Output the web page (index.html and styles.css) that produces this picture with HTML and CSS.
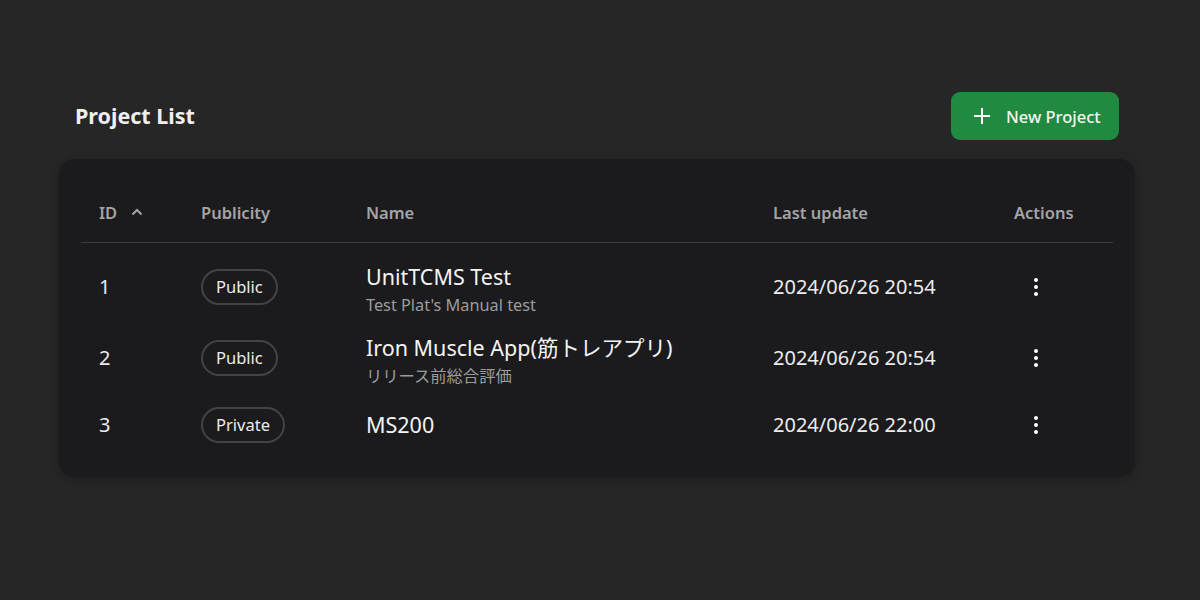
FILE: index.html
```html
<!DOCTYPE html>
<html lang="ja">
<head>
<meta charset="utf-8">
<title>Project List</title>
<link rel="stylesheet" href="styles.css">
</head>
<body>
<main class="page">
  <header class="page-head">
    <h1 class="title">Project List</h1>
    <button class="btn-new">
      <svg class="plus" width="18" height="18" viewBox="0 0 18 18"><path d="M9 1v16M1 9h16" stroke="#fff" stroke-width="2" fill="none"/></svg>
      <span>New Project</span>
    </button>
  </header>
  <section class="card">
    <div class="row head">
      <div class="cell">ID <svg class="sort" width="12" height="8" viewBox="0 0 12 8"><path d="M1.5 6.5L6 2l4.5 4.5" stroke="#a3a3a8" stroke-width="2" fill="none"/></svg></div>
      <div class="cell">Publicity</div>
      <div class="cell">Name</div>
      <div class="cell">Last update</div>
      <div class="cell">Actions</div>
    </div>
    <div class="body">
      <div class="row item">
        <div class="cell">1</div>
        <div class="cell"><span class="chip">Public</span></div>
        <div class="cell name"><div class="n">UnitTCMS Test</div><div class="sub">Test Plat's Manual test</div></div>
        <div class="cell">2024/06/26 20:54</div>
        <div class="cell"><svg class="kebab" width="24" height="24" viewBox="0 0 24 24"><circle cx="12" cy="5" r="2" fill="#fff"/><circle cx="12" cy="12" r="2" fill="#fff"/><circle cx="12" cy="19" r="2" fill="#fff"/></svg></div>
      </div>
      <div class="row item">
        <div class="cell">2</div>
        <div class="cell"><span class="chip">Public</span></div>
        <div class="cell name"><div class="n">Iron Muscle App(筋トレアプリ)</div><div class="sub">リリース前総合評価</div></div>
        <div class="cell">2024/06/26 20:54</div>
        <div class="cell"><svg class="kebab" width="24" height="24" viewBox="0 0 24 24"><circle cx="12" cy="5" r="2" fill="#fff"/><circle cx="12" cy="12" r="2" fill="#fff"/><circle cx="12" cy="19" r="2" fill="#fff"/></svg></div>
      </div>
      <div class="row item single">
        <div class="cell">3</div>
        <div class="cell"><span class="chip">Private</span></div>
        <div class="cell name"><div class="n">MS200</div></div>
        <div class="cell">2024/06/26 22:00</div>
        <div class="cell"><svg class="kebab" width="24" height="24" viewBox="0 0 24 24"><circle cx="12" cy="5" r="2" fill="#fff"/><circle cx="12" cy="12" r="2" fill="#fff"/><circle cx="12" cy="19" r="2" fill="#fff"/></svg></div>
      </div>
    </div>
  </section>
</main>
</body>
</html>
```
FILE: styles.css
```css
* { box-sizing: border-box; }
html, body { margin: 0; padding: 0; }
body {
  background: #262626;
  color: #ececec;
  font-family: "Noto Sans", "Noto Sans CJK JP", sans-serif;
  width: 1200px;
  height: 600px;
  overflow: hidden;
}
.page {
  padding: 92px 81px 0 75px;
}
.page-head {
  display: flex;
  align-items: center;
  justify-content: space-between;
  height: 48px;
  margin-bottom: 19px;
}
.title {
  margin: 0;
  font-size: 21.5px;
  font-weight: 700;
  color: #efefef;
  line-height: 50px;
}
.btn-new {
  display: flex;
  align-items: center;
  gap: 15px;
  height: 48px;
  width: 168px;
  padding: 0 0 0 22px;
  border: none;
  border-radius: 9px;
  background: #208a40;
  color: #f4f4f4;
  font-family: inherit;
  font-size: 16.5px;
  font-weight: 500;
}
.card {
  margin: 0 -16px 0 -16px;
  background: #1b1b1d;
  border-radius: 16px;
  padding: 24px 22px 21px;
  box-shadow: 0 2px 10px rgba(0,0,0,0.25);
}
.row {
  display: grid;
  grid-template-columns: 102px 165px 407px 241px 1fr;
  align-items: center;
}
.cell { padding-left: 18px; }
.head {
  height: 60px;
  border-bottom: 1px solid #3b3b3e;
  padding-bottom: 1px;
  color: #a3a3a8;
  font-size: 16.5px;
  font-weight: 600;
}
.head .cell { display: flex; align-items: center; }
.sort { margin-left: 14px; }
.body { padding-top: 8px; }
.item {
  height: 71px;
  font-size: 20px;
}
.item.single { height: 63px; }
.chip {
  display: inline-flex;
  align-items: center;
  height: 36px;
  padding: 0 13px;
  border: 2px solid #434347;
  border-radius: 18px;
  font-size: 16.5px;
  color: #ececec;
}
.name { padding-top: 6px; }
.single .name { padding-top: 0; }
.name .n { font-size: 21.5px; line-height: 28px; color: #f4f4f4; }
.name .sub { font-size: 16.3px; line-height: 22px; color: #9c9c9f; margin-top: 3px; }
.kebab { display: block; margin-left: 10px; }
```
